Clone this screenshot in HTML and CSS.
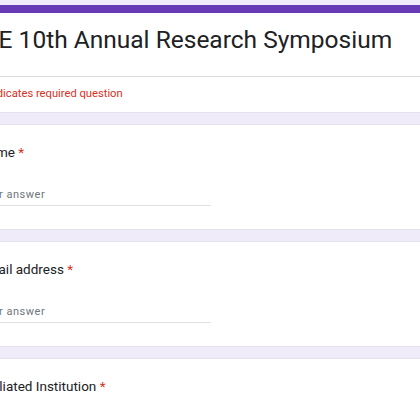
FILE: index.html
```html
<!DOCTYPE html>
<html lang="en">
<head>
    <meta charset="UTF-8">
    <meta name="viewport" content="width=device-width, initial-scale=1.0">
    <title>Research Symposium Registration</title>
    <link rel="stylesheet" href="styles.css">
</head>
<body>

<div class="form">
    <div class="card header">
        <div class="form-title">ICE 10th Annual Research Symposium</div>
        <div class="required-note">* Indicates required question</div>
    </div>

    <div class="card question">
        <div class="q-title">Name <span class="req">*</span></div>
        <div class="answer">Your answer</div>
    </div>

    <div class="card question">
        <div class="q-title">Email address <span class="req">*</span></div>
        <div class="answer">Your answer</div>
    </div>

    <div class="card question">
        <div class="q-title">Affiliated Institution <span class="req">*</span></div>
        <div class="answer">Your answer</div>
    </div>
</div>

</body>
</html>
```

FILE: styles.css
```css
body {
    margin: 0;
    background-color: #f0ebf8;
    overflow: hidden;
    font-family: Roboto, Arial, sans-serif;
}

.form {
    width: 680px;
    margin-left: -46px;
    padding-top: 5px;
}

.card {
    background-color: #fff;
    border: 1px solid #e6e1ee;
    border-radius: 8px;
    margin-bottom: 11px;
}

.header {
    border-top: 8px solid #673ab7;
}

.form-title {
    font-size: 24.5px;
    color: #202124;
    padding: 10px 24px 19px 21px;
    line-height: 34px;
}

.required-note {
    border-top: 1px solid #dadce0;
    color: #d93025;
    font-size: 11.2px;
    padding: 10px 24px 12px 25px;
}

.question {
    padding: 17px 24px 23px;
}

.q-title {
    font-size: 13.5px;
    color: #202124;
    line-height: 20px;
}

.req {
    color: #d93025;
}

.answer {
    width: 232px;
    margin-top: 26px;
    padding-bottom: 4px;
    border-bottom: 1px solid #e0e0e0;
    color: #70757a;
    font-size: 11px;
    letter-spacing: 0.5px;
}
```
